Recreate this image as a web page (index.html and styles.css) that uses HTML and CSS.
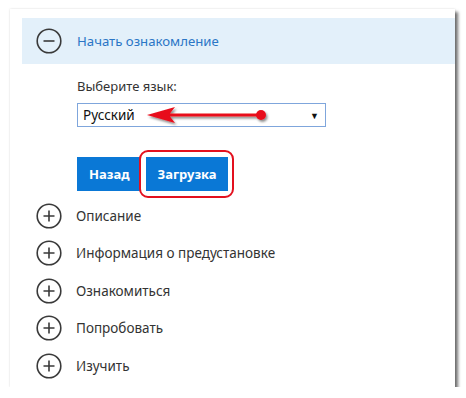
FILE: index.html
```html
<!DOCTYPE html>
<html lang="ru">
<head>
<meta charset="utf-8">
<link rel="stylesheet" href="styles.css">
</head>
<body>
<div class="card">
  <div class="header">
    <svg class="icon" width="26" height="26" viewBox="0 0 26 26"><circle cx="13" cy="13" r="11.8" fill="none" stroke="#3a3a3a" stroke-width="1.6"/><line x1="7.5" y1="13" x2="18.5" y2="13" stroke="#3a3a3a" stroke-width="1.6"/></svg>
    <span class="header-text">Начать ознакомление</span>
  </div>
  <div class="content">
    <div class="label">Выберите язык:</div>
    <div class="select-wrap">
      <div class="select"><span>Русский</span><span class="caret">▼</span></div>
      <svg class="annot-arrow" width="130" height="24" viewBox="0 0 130 24">
        <defs><filter id="sh" x="-10%" y="-50%" width="130%" height="200%"><feDropShadow dx="1.5" dy="2" stdDeviation="1.2" flood-color="#000" flood-opacity="0.45"/></filter></defs>
        <g filter="url(#sh)">
          <polygon points="2,12 30,4 25,10.5 116,10.5 116,13.5 25,13.5 30,20" fill="#e8101c"/>
          <circle cx="116" cy="12" r="5" fill="#e8101c"/>
        </g>
      </svg>
    </div>
    <div class="buttons">
      <button class="btn btn-back">Назад</button>
      <span class="highlight"><button class="btn btn-load">Загрузка</button></span>
    </div>
  </div>
  <ul class="list">
    <li><svg class="icon" width="26" height="26" viewBox="0 0 26 26"><circle cx="13" cy="13" r="11.8" fill="none" stroke="#3a3a3a" stroke-width="1.6"/><path d="M7.5 13H18.5M13 7.5V18.5" stroke="#3a3a3a" stroke-width="1.6"/></svg><span>Описание</span></li>
    <li><svg class="icon" width="26" height="26" viewBox="0 0 26 26"><circle cx="13" cy="13" r="11.8" fill="none" stroke="#3a3a3a" stroke-width="1.6"/><path d="M7.5 13H18.5M13 7.5V18.5" stroke="#3a3a3a" stroke-width="1.6"/></svg><span>Информация о предустановке</span></li>
    <li><svg class="icon" width="26" height="26" viewBox="0 0 26 26"><circle cx="13" cy="13" r="11.8" fill="none" stroke="#3a3a3a" stroke-width="1.6"/><path d="M7.5 13H18.5M13 7.5V18.5" stroke="#3a3a3a" stroke-width="1.6"/></svg><span>Ознакомиться</span></li>
    <li><svg class="icon" width="26" height="26" viewBox="0 0 26 26"><circle cx="13" cy="13" r="11.8" fill="none" stroke="#3a3a3a" stroke-width="1.6"/><path d="M7.5 13H18.5M13 7.5V18.5" stroke="#3a3a3a" stroke-width="1.6"/></svg><span>Попробовать</span></li>
    <li><svg class="icon" width="26" height="26" viewBox="0 0 26 26"><circle cx="13" cy="13" r="11.8" fill="none" stroke="#3a3a3a" stroke-width="1.6"/><path d="M7.5 13H18.5M13 7.5V18.5" stroke="#3a3a3a" stroke-width="1.6"/></svg><span>Изучить</span></li>
  </ul>
</div>
</body>
</html>
```
FILE: styles.css
```css
html, body {
  margin: 0;
  padding: 0;
  background: #ffffff;
}
body {
  font-family: "Noto Sans", "Open Sans", sans-serif;
  font-size: 13.5px;
  color: #333333;
  padding: 9px 0 0 10px;
}
.card {
  width: 445px;
  height: 378px;
  box-sizing: border-box;
  background: #ffffff;
  padding-top: 9px;
  box-shadow: 3px 3px 3px rgba(0,0,0,0.55), 0 0 2px rgba(0,0,0,0.15);
}
.header {
  margin-left: 12px;
  height: 46px;
  background: #e3f0fa;
  display: flex;
  align-items: center;
  padding-left: 14px;
}
.icon {
  flex: none;
  display: block;
}
.header-text {
  margin-left: 15px;
  color: #2b76c6;
  font-size: 13.2px;
}
.content {
  padding-left: 67px;
  padding-top: 12px;
}
.label {
  line-height: 20px;
  color: #333;
  font-size: 13px;
}
.select-wrap {
  position: relative;
  margin-top: 7px;
  width: 249px;
}
.select {
  height: 24px;
  box-sizing: border-box;
  border: 1px solid #7fa6dc;
  display: flex;
  align-items: center;
  justify-content: space-between;
  padding: 0 6px 0 5px;
  color: #111;
}
.caret {
  font-size: 9px;
  color: #111;
}
.annot-arrow {
  position: absolute;
  left: 68px;
  top: 0px;
}
.buttons {
  margin-top: 30px;
  display: flex;
  gap: 5px;
}
.btn {
  height: 34px;
  border: none;
  background: #0a78d6;
  color: #ffffff;
  font-family: inherit;
  font-weight: bold;
  font-size: 13px;
  margin: 0;
}
.btn-back {
  padding: 0 12px;
}
.btn-load {
  padding: 0 11px;
}
.highlight {
  position: relative;
  display: block;
}
.highlight::after {
  content: "";
  position: absolute;
  left: -7px;
  right: -6px;
  top: -7px;
  bottom: -7px;
  border: 2px solid #e3101e;
  border-radius: 9px;
}
.list {
  list-style: none;
  margin: 6px 0 0 0;
  padding: 0 0 0 26px;
}
.list li {
  height: 37.5px;
  display: flex;
  align-items: center;
}
.list li span {
  margin-left: 14px;
  color: #333;
}
```
